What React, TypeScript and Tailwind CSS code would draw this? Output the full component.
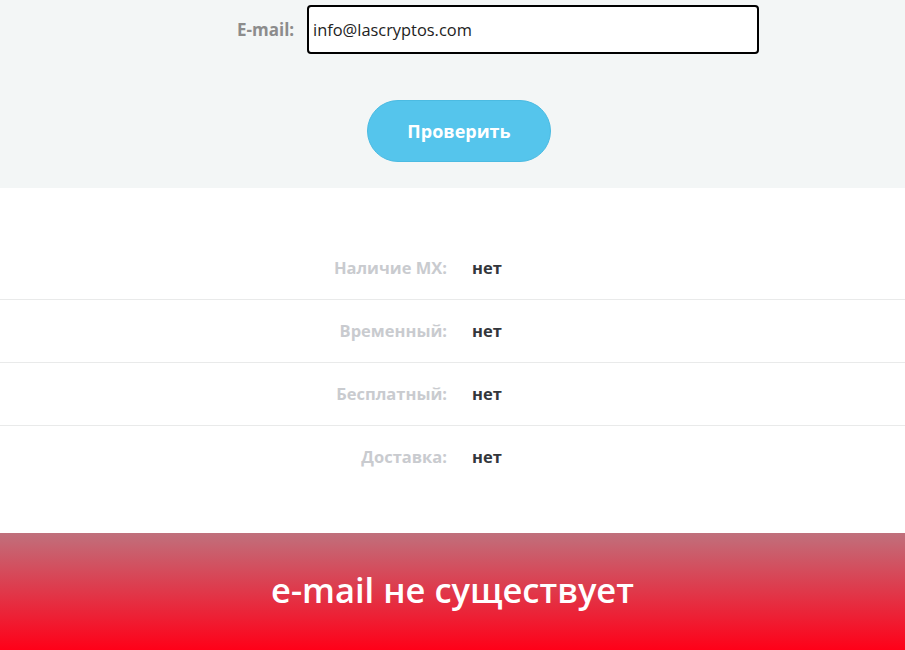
import React from "react";

const rows = [
  { label: "Наличие MX:", value: "нет" },
  { label: "Временный:", value: "нет" },
  { label: "Бесплатный:", value: "нет" },
  { label: "Доставка:", value: "нет" },
];

const App: React.FC = () => {
  return (
    <div className="w-full min-h-[650px] bg-white font-['Open_Sans',sans-serif]">
      {/* form */}
      <div className="bg-[#f3f6f6] h-[188px] pt-[5px]">
        <div className="flex items-center pl-[237px]">
          <label className="w-[58px] text-[17px] font-bold text-[#8c8c8c]">
            E-mail:
          </label>
          <input
            type="text"
            defaultValue="info@lascryptos.com"
            className="ml-[12px] w-[452px] h-[49px] border-2 border-black rounded-[4px] bg-white px-[4px] text-[16.4px] text-[#222] outline-none"
          />
        </div>

        <div className="flex justify-center mt-[46px] pl-[13px]">
          <button className="w-[184px] h-[62px] rounded-full bg-[#55c5ec] border border-[#4bbbe2] text-white text-[18px] font-bold">
            Проверить
          </button>
        </div>
      </div>

      {/* results */}
      <div className="pt-[49px] pb-[44px]">
        {rows.map((row, i) => (
          <div
            key={row.label}
            className={`flex items-center h-[63px] ${
              i < rows.length - 1 && "border-b border-[#e9eaea]"
            }`}
          >
            <p className="w-[447px] text-right text-[16.5px] font-bold text-[#c9cbcf]">
              {row.label}
            </p>
            <p className="ml-[25px] text-[16.5px] font-bold text-[#33363b]">
              {row.value}
            </p>
          </div>
        ))}
      </div>

      {/* status banner */}
      <div className="h-[117px] flex items-center justify-center pb-[4px] bg-[linear-gradient(to_bottom,#c0707c,#ff0018)]">
        <p className="text-white text-[34.5px] font-semibold">
          e-mail не существует
        </p>
      </div>
    </div>
  );
};

export default App;
